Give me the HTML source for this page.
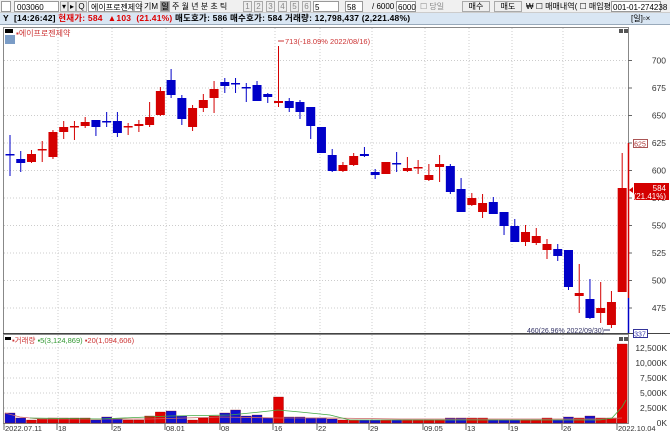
<!DOCTYPE html>
<html><head><meta charset="utf-8">
<style>
*{margin:0;padding:0;box-sizing:border-box}
body{width:670px;height:434px;overflow:hidden;background:#fff;font-family:"Liberation Sans","Noto Sans CJK KR",sans-serif;position:relative}
.tb{position:absolute;left:0;top:0;width:670px;height:13px;background:#f0f0f0;border-bottom:1px solid #ccc}
.hd{position:absolute;left:0;top:13px;width:670px;height:12px;background:#d9e6f3;border-bottom:1px solid #9ab}
.t{position:absolute;font-size:9px;line-height:11px;white-space:nowrap}
.box{position:absolute;border:1px solid #999;background:#fff;height:11px}
.btn{position:absolute;border:1px solid #aaa;background:#eee;height:11px;font-size:8px;line-height:9px;text-align:center;color:#888}
</style></head><body>
<div class="tb"></div>
<div class="box" style="left:1px;top:1px;width:10px"></div>
<div class="box" style="left:14px;top:1px;width:45px"><span class="t" style="left:2px;top:0;font-size:8px">003060</span></div>
<div class="btn" style="left:60px;top:1px;width:8px;color:#000">▾</div>
<div class="btn" style="left:68px;top:1px;width:8px;color:#000">▸</div>
<div class="btn" style="left:76px;top:1px;width:11px;color:#000">Q</div>
<div class="box" style="left:88px;top:1px;width:54px"><span class="t" style="left:2px;top:0;font-size:8px">에이프로젠제약</span></div>
<span class="t" style="left:144px;top:1px;font-size:8px">기M</span>
<div class="btn" style="left:160px;top:1px;width:10px;background:#888;color:#000">일</div>
<span class="t" style="left:172px;top:1px;font-size:8px">주 월 년 분 초 틱</span>
<div class="btn" style="left:243px;top:1px;width:9px">1</div><div class="btn" style="left:254px;top:1px;width:9px">2</div><div class="btn" style="left:266px;top:1px;width:9px">3</div><div class="btn" style="left:278px;top:1px;width:9px">4</div><div class="btn" style="left:290px;top:1px;width:9px">5</div><div class="btn" style="left:302px;top:1px;width:9px">6</div>
<div class="box" style="left:313px;top:1px;width:26px"><span class="t" style="left:1px;top:0;font-size:8px">5</span></div>
<div class="box" style="left:345px;top:1px;width:18px"><span class="t" style="left:1px;top:0;font-size:8px">58</span></div>
<span class="t" style="left:372px;top:1px;font-size:8px">/ 6000</span>
<div class="box" style="left:396px;top:1px;width:20px"><span class="t" style="left:1px;top:0;font-size:8px">6000</span></div>
<span class="t" style="left:420px;top:1px;font-size:8px;color:#888">☐ 당일</span>
<div class="btn" style="left:462px;top:1px;width:28px;color:#000">매수</div>
<div class="btn" style="left:494px;top:1px;width:28px;color:#000">매도</div>
<span class="t" style="left:526px;top:1px;font-size:8px">₩ ☐ 매매내역( ☐ 매입평균)</span>
<div class="box" style="left:611px;top:1px;width:50px"><span class="t" style="left:1px;top:0;font-size:8px">001-01-274238</span></div>
<div class="hd"></div>
<span class="t" style="left:3px;top:13px;font-weight:bold;font-size:8.5px;letter-spacing:0.2px">Y&nbsp; [14:26:42] <span style="color:#d00">현재가: 584 &nbsp;▲103 &nbsp;(21.41%)</span> 매도호가: 586 매수호가: 584 거래량: 12,798,437 (2,221.48%)</span>
<span class="t" style="left:631px;top:13px;font-size:8px">[일]▫×</span>
<svg id="c" width="670" height="434" style="position:absolute;left:0;top:0" xmlns="http://www.w3.org/2000/svg" font-family="Liberation Sans, Noto Sans CJK KR, sans-serif"></svg>
<script>
var s='';
s+='<rect x="3.5" y="27.5" width="625" height="306" fill="none" stroke="#888"/>';
s+='<rect x="3.5" y="334.5" width="625" height="89" fill="none" stroke="#888"/>';
s+='<line x1="3" y1="333.5" x2="670" y2="333.5" stroke="#444"/>';
for(var p=700;p>=475;p-=25){var y=143+(625-p)*1.1;s+='<line x1="4" x2="628" y1="'+y+'" y2="'+y+'" stroke="#ccc" stroke-dasharray="1,2"/>';s+='<line x1="628" x2="632" y1="'+y+'" y2="'+y+'" stroke="#666"/>';s+='<text x="666" y="'+(y+3)+'" font-size="8.5" text-anchor="end" fill="#333">'+p+'</text>';}
var vl=[[12500,'12,500K'],[10000,'10,000K'],[7500,'7,500K'],[5000,'5,000K'],[2500,'2,500K'],[0,'0K']];
vl.forEach(function(v){var y=423-v[0]*0.006;if(v[0]>0)s+='<line x1="4" x2="628" y1="'+y+'" y2="'+y+'" stroke="#ccc" stroke-dasharray="1,2"/>';s+='<text x="667" y="'+(y+3)+'" font-size="8.5" text-anchor="end" fill="#333">'+v[1]+'</text>';});
var vx=[58,112,166,222,275,320,372,425,469,512,563];
vx.forEach(function(x){s+='<line x1="'+x+'" x2="'+x+'" y1="28" y2="333" stroke="#ccc" stroke-dasharray="1,2"/><line x1="'+x+'" x2="'+x+'" y1="335" y2="423" stroke="#ccc" stroke-dasharray="1,2"/>';});
var C=[[154,155,135,176,'b'],[159,163,151,172,'b'],[154,162,150,163,'r'],[149,150,141,162,'r'],[132,157,130,159,'r'],[127,132,121,139,'r'],[126,127,121,140,'r'],[122,126,117,128,'r'],[120,127,120,136,'b'],[121,122,112,127,'b'],[121,133,112,137,'b'],[126,127,123,135,'r'],[124,126,120,132,'r'],[117,125,102,127,'r'],[91,115,87,116,'r'],[80,95,69,98,'b'],[98,119,95,125,'b'],[108,127,105,131,'r'],[100,108,94,112,'r'],[89,98,81,113,'r'],[82,86,78,93,'b'],[83,84,78,93,'b'],[87,88,83,102,'b'],[85,101,81,101,'b'],[94,97,93,103,'b'],[101,103,46,107,'r'],[101,108,98,112,'b'],[102,112,100,119,'b'],[107,126,107,139,'b'],[127,153,127,153,'b'],[155,171,149,172,'b'],[165,171,162,172,'r'],[156,165,153,166,'r'],[154,156,147,157,'b'],[172,175,169,179,'b'],[162,174,162,174,'r'],[163,164,152,172,'b'],[168,171,157,172,'r'],[167,168,160,174,'r'],[175,180,164,181,'r'],[164,167,155,182,'r'],[166,192,164,194,'b'],[189,212,178,212,'b'],[198,205,193,206,'r'],[203,212,194,218,'r'],[202,214,197,214,'b'],[212,226,212,235,'b'],[226,242,219,242,'b'],[232,242,225,246,'r'],[236,243,228,245,'r'],[244,250,239,259,'r'],[249,256,244,261,'b'],[250,287,250,290,'b'],[293,296,264,313,'r'],[299,318,279,319,'b'],[308,313,282,323,'r'],[302,325,291,328,'r'],[188,292,153,292,'r']];
var V=[10,5,3,4,5,5,5,5,3,6,4,3,3,7,11,12,7,3,5,7,10,13,7,8,5,26,6,6,5,5,4,3,3,3,3,3,3,3,3,3,3,5,5,5,5,3,3,3,3,3,5,3,6,5,7,5,5,79];
var RC='#d40000',BC='#0000c8';
C.forEach(function(c,i){var x=10+i*10.74;var col=c[4]=='r'?RC:BC;
s+='<line x1="'+x+'" x2="'+x+'" y1="'+c[2]+'" y2="'+c[3]+'" stroke="'+col+'" stroke-width="1"/>';
var h=Math.max(c[1]-c[0],1.5);s+='<rect x="'+(x-4.5)+'" y="'+c[0]+'" width="9" height="'+h+'" fill="'+col+'"/>';
var vcol=c[4]=='r'?'#e00000':'#1010d0';s+='<rect x="'+(x-5)+'" y="'+(423-V[i])+'" width="10" height="'+V[i]+'" fill="'+vcol+'" stroke="#800" stroke-width="0.3"/>';});
s+='<polyline fill="none" stroke="#c66" stroke-width="0.8" points="5,413 20,417 40,419 150,419 220,417 280,418 330,418 400,419 600,419 622,418"/>';
s+='<polyline fill="none" stroke="#4a4" stroke-width="0.8" points="30,418 100,419 170,416 230,415 260,412 278,410 300,412 330,415 350,420 600,420 612,418 622,407 626,400"/>';
s+='<line x1="628.5" x2="628.5" y1="143" y2="298" stroke="'+RC+'" stroke-width="1.5"/><line x1="628.5" x2="628.5" y1="298" y2="333" stroke="'+BC+'" stroke-width="1.5"/>';
s+='<rect x="633.5" y="139.5" width="14" height="8" fill="#fff" stroke="#a55"/><text x="640" y="146.5" font-size="7" text-anchor="middle" fill="#a33">625</text>';
s+='<rect x="633.5" y="329.5" width="14" height="8" fill="#fff" stroke="#339"/><text x="640" y="336.5" font-size="7" text-anchor="middle" fill="#33a">337</text>';
s+='<rect x="634" y="183" width="35" height="17" fill="'+RC+'"/><text x="666" y="191" font-size="8" text-anchor="end" fill="#fff">584</text><text x="666" y="199" font-size="8" text-anchor="end" fill="#fff">(21.41%)</text>';
s+='<polygon points="629,190 633,187 633,193" fill="'+RC+'"/>';
s+='<line x1="278" x2="284" y1="41" y2="41" stroke="#c33"/><text x="285" y="44" font-size="7.5" fill="#c33">713(-18.09% 2022/08/16)</text>';
s+='<text x="604" y="333" font-size="7" text-anchor="end" fill="#336">460(26.96% 2022/09/30)</text><line x1="604" x2="610" y1="330" y2="330" stroke="#336"/>';
s+='<rect x="5" y="29" width="8" height="4" fill="#000"/><rect x="5" y="35" width="10" height="9" fill="#7a9cc6"/><text x="16" y="36" font-size="8" fill="#c33">▪에이프로젠제약</text>';
s+='<rect x="5" y="337" width="6" height="3" fill="#000"/><text x="12" y="343" font-size="7.5" fill="#c33">▪거래량 <tspan fill="#393">▪5(3,124,869)</tspan> ▪20(1,094,606)</text>';
s+='<rect x="619" y="337" width="4" height="4" fill="#555"/><rect x="624" y="337" width="4" height="4" fill="#555"/><rect x="619" y="29" width="4" height="4" fill="#555"/><rect x="624" y="29" width="4" height="4" fill="#555"/>';
var xl=[[5,'2022.07.11'],[58,'18'],[113,'25'],[166,'08.01'],[221,'08'],[274,'16'],[318,'22'],[370,'29'],[424,'09.05'],[467,'13'],[510,'19'],[563,'26'],[618,'2022.10.04']];
xl.forEach(function(l){s+='<line x1="'+(l[0]-1)+'" x2="'+(l[0]-1)+'" y1="423" y2="430" stroke="#666"/><text x="'+l[0]+'" y="431" font-size="7.5" fill="#333">'+l[1]+'</text>';});
document.getElementById('c').innerHTML=s;
</script>
</body></html>
